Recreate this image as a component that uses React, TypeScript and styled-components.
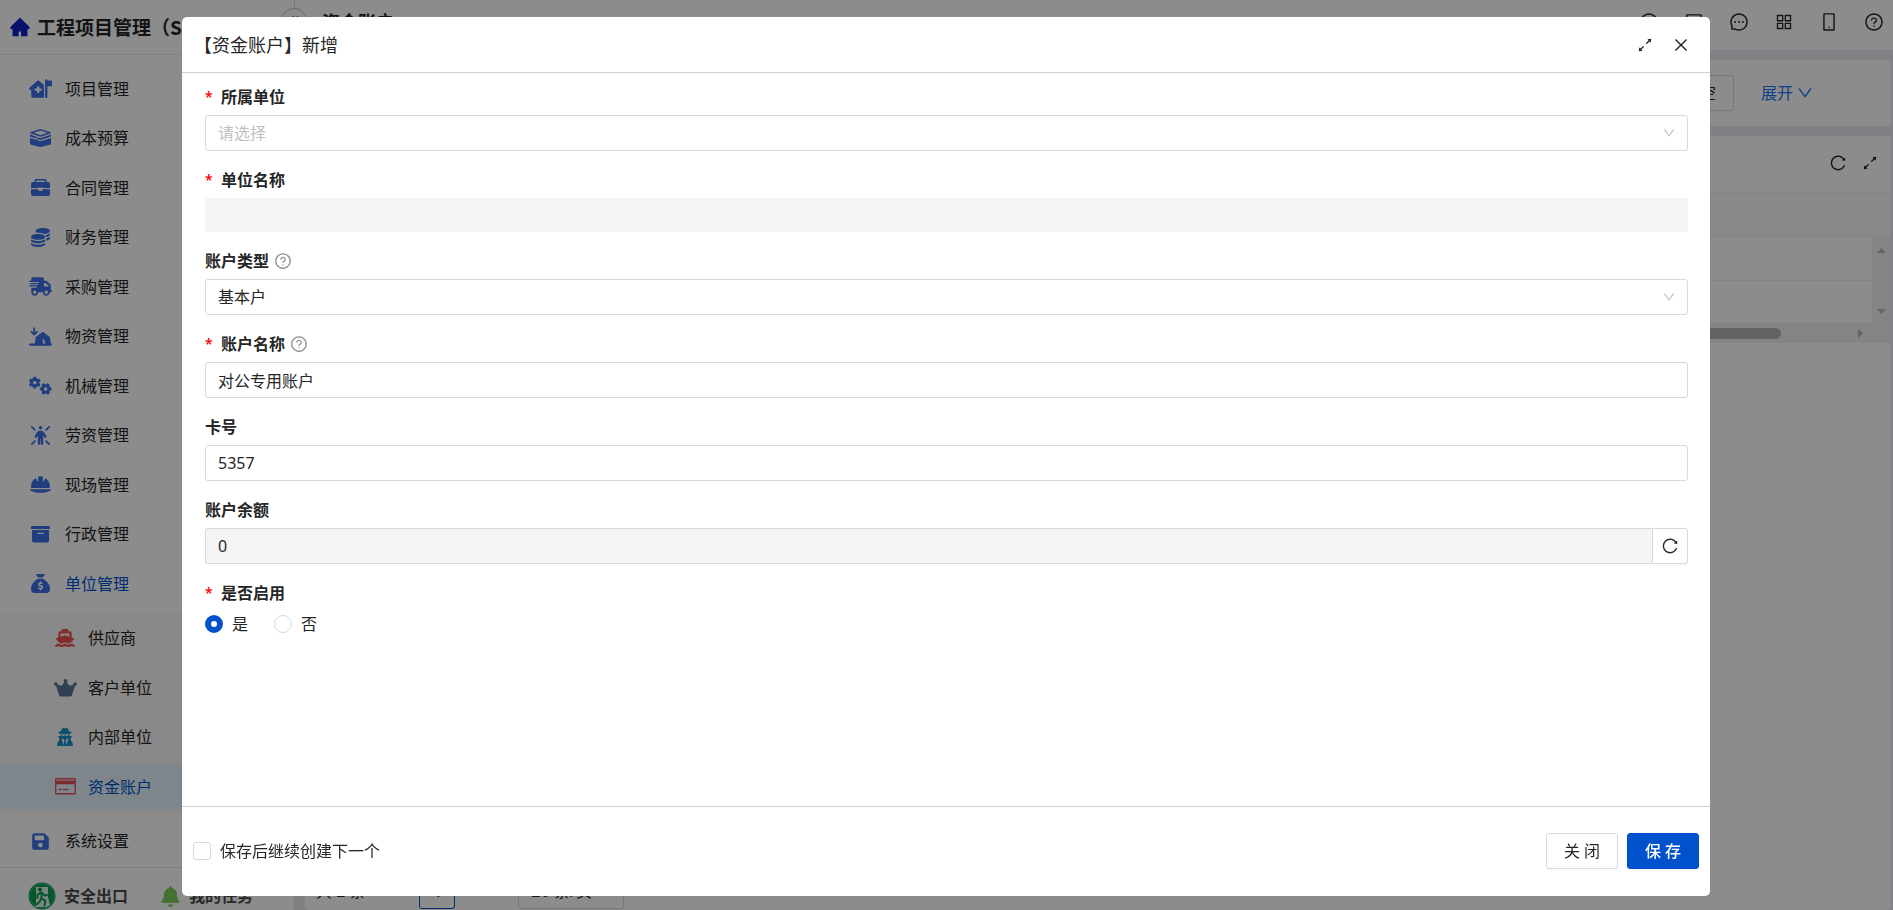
import React, { useState } from "react";
import styled, { createGlobalStyle, css } from "styled-components";
import {
  AiFillHome,
  AiOutlineAppstore,
  AiOutlineArrowsAlt,
  AiOutlineClockCircle,
  AiOutlineClose,
  AiOutlineDoubleLeft,
  AiOutlineDown,
  AiOutlineLeft,
  AiOutlineMessage,
  AiOutlineMobile,
  AiOutlineProfile,
  AiOutlineQuestionCircle,
  AiOutlineReload,
  AiOutlineRight,
} from "react-icons/ai";
import {
  FaBell,
  FaCoins,
  FaFloppyDisk,
  FaGears,
  FaHelmetSafety,
  FaHouseMedicalFlag,
  FaPersonRays,
  FaSackDollar,
  FaShip,
  FaTentArrowDownToLine,
  FaTruckFast,
  FaUserSecret,
} from "react-icons/fa6";

const primary = "#0052cc";
const ink = "#262626";
const line = "#d9d9d9";

const GlobalStyle = createGlobalStyle`
  *, *::before, *::after { box-sizing: border-box; }
  body {
    margin: 0;
    overflow: hidden;
    color: ${ink};
    background: #fff;
    font: 16px/24px "Noto Sans", "Noto Sans CJK SC", sans-serif;
  }
  button, input, select { font: inherit; color: inherit; }
  svg { display: block; flex: none; }
`;

/* ---------- page shell ---------- */

const Shell = styled.div`
  display: flex;
  height: 100vh;
  overflow: hidden;
`;

const Sidebar = styled.aside`
  display: flex;
  flex-direction: column;
  flex: none;
  width: 295px;
  border-right: 1px solid #e0e0e0;
`;

const Brand = styled.div`
  display: flex;
  align-items: center;
  gap: 6px;
  flex: none;
  height: 55px;
  padding-left: 9px;
  overflow: hidden;
  white-space: nowrap;
  font-family: "Noto Sans CJK SC", sans-serif;
  font-size: 19px;
  font-weight: 700;
  border-bottom: 1px solid #ececec;
  svg { color: #0d24c4; }
`;

const Nav = styled.nav`
  display: flex;
  flex-direction: column;
  flex: 1;
  padding: 9px 0 1px;
`;

const NavGroup = styled.ul<{ $count: number; $nested?: boolean }>`
  box-sizing: content-box;
  display: flex;
  flex-direction: column;
  flex: ${(p) => p.$count} 1 0;
  margin: 0;
  padding: 0;
  list-style: none;
  ${(p) =>
    p.$nested &&
    css`
      margin: 2px 0 3px;
      padding: 3px 0 2px;
      background: #fafafa;
    `}
`;

const NavCell = styled.li`
  display: flex;
  flex: 1 1 0;
  padding: 2px 0;
`;

const NavLink = styled.a<{ $nested?: boolean; $tone?: string; $selected?: boolean; $active?: boolean }>`
  display: flex;
  align-items: center;
  flex: 1;
  gap: ${(p) => (p.$nested ? 11 : 13)}px;
  padding-left: ${(p) => (p.$nested ? 53 : 28)}px;
  border-radius: 6px;
  color: ${(p) => (p.$active || p.$selected ? primary : ink)};
  background: ${(p) => (p.$selected ? "#e6f4ff" : "transparent")};
  text-decoration: none;
  span {
    display: flex;
    justify-content: center;
    width: 24px;
    color: ${(p) => p.$tone ?? "#3b6fe8"};
  }
`;

const Shortcuts = styled.div`
  display: flex;
  align-items: center;
  flex: none;
  height: 43px;
  padding: 14px 0 0 28px;
  border-top: 1px solid #e4e4e4;
`;

const Shortcut = styled.a<{ $tone?: string }>`
  display: flex;
  align-items: center;
  gap: 8px;
  height: 28px;
  margin-right: 32px;
  color: #4a4a4a;
  font-weight: 700;
  white-space: nowrap;
  text-decoration: none;
  svg { color: ${(p) => p.$tone}; }
`;

const Main = styled.main`
  display: flex;
  flex-direction: column;
  flex: 1;
  min-width: 0;
  background: #e8ebf0;
`;

const TopBar = styled.header`
  position: relative;
  display: flex;
  align-items: center;
  justify-content: space-between;
  flex: none;
  height: 50px;
  padding: 0 9px 6px 27px;
  background: #fff;
`;

const PageTitle = styled.h1`
  margin: 0;
  font-size: 18px;
  line-height: 24px;
`;

const CollapseButton = styled.button`
  position: absolute;
  top: 8px;
  left: -14px;
  display: grid;
  place-items: center;
  width: 26px;
  height: 26px;
  padding: 0;
  border: 1px solid #bfbfbf;
  border-radius: 50%;
  background: #fff;
`;

const TopTools = styled.div`
  display: flex;
  gap: 25px;
`;

const IconButton = styled.button`
  display: grid;
  place-items: center;
  padding: 0;
  border: 0;
  background: none;
  cursor: pointer;
`;

const Content = styled.div`
  display: flex;
  flex-direction: column;
  flex: 1;
  gap: 10px;
  min-height: 0;
  padding: 10px 2px 0 10px;
`;

const FilterCard = styled.section`
  display: flex;
  align-items: center;
  justify-content: flex-end;
  gap: 27px;
  flex: none;
  height: 66px;
  padding-right: 77px;
  border-radius: 4px;
  background: #fff;
`;

const ExpandLink = styled.button`
  display: flex;
  align-items: center;
  gap: 3px;
  padding: 0;
  border: 0;
  background: none;
  color: #2474f5;
`;

const ListCard = styled.section`
  display: flex;
  flex-direction: column;
  flex: 1;
  min-height: 0;
  border-radius: 4px;
  background: #fff;
`;

const ListTools = styled.div`
  display: flex;
  align-items: center;
  justify-content: flex-end;
  gap: 14px;
  flex: none;
  height: 56px;
  padding: 0 12px 2px 0;
`;

const TableArea = styled.div`
  display: grid;
  grid-template-columns: 1fr 19px;
  flex: none;
`;

const Table = styled.table`
  grid-column: 1 / -1;
  width: 100%;
  border-collapse: collapse;
  th {
    height: 44px;
    padding: 0;
    border: solid #efefef;
    border-width: 1px 0;
    background: #f9f9f9;
  }
`;

const BodyTable = styled.table`
  width: 100%;
  border-collapse: collapse;
  td {
    height: 43px;
    padding: 0;
  }
  tr + tr td { border-top: 1px solid #efefef; }
`;

const VerticalTrack = styled.div`
  display: flex;
  flex-direction: column;
  align-items: center;
  justify-content: space-between;
  padding: 11px 0 9px;
  background: #f1f1f1;
`;

const HorizontalTrack = styled.div`
  display: flex;
  align-items: center;
  grid-column: 1 / -1;
  height: 20px;
  padding-right: 28px;
  background: #f1f1f1;
`;

const Thumb = styled.div`
  flex: none;
  width: calc(100% - 82px);
  height: 11px;
  margin-right: auto;
  border-radius: 6px;
  background: #b4b4b4;
`;

const Pagination = styled.div`
  display: flex;
  align-items: center;
  gap: 20px;
  flex: none;
  margin-top: auto;
  height: 37px;
  padding: 0 0 1px 11px;
`;

const PageNumber = styled.button`
  width: 36px;
  height: 36px;
  padding: 0;
  border: 1px solid ${primary};
  border-radius: 3px;
  background: #fff;
  color: ${primary};
  font-weight: 600;
`;

const PageSize = styled.select`
  appearance: none;
  width: 106px;
  height: 36px;
  margin-left: 9px;
  padding: 0 12px;
  border: 1px solid ${line};
  border-radius: 3px;
  background: #fff;
`;

/* ---------- dialog ---------- */

const Mask = styled.div`
  position: fixed;
  inset: 0;
  display: flex;
  padding: 17px 183px 14px 182px;
  background: rgba(0, 0, 0, 0.45);
`;

const Dialog = styled.section`
  display: flex;
  flex-direction: column;
  flex: 1;
  min-width: 0;
  border-radius: 5px;
  background: #fff;
`;

const DialogHeader = styled.header`
  display: flex;
  align-items: center;
  justify-content: space-between;
  flex: none;
  height: 56px;
  padding: 0 20px 0 12px;
  border-bottom: 1px solid #d0d0d0;
`;

const DialogTitle = styled.h2`
  margin: 0;
  font-size: 18px;
  font-weight: 400;
`;

const DialogTools = styled.div`
  display: flex;
  gap: 18px;
`;

const Form = styled.form`
  flex: 1;
  min-height: 0;
  padding: 6px 22px 0 23px;
  overflow: hidden;
`;

const Field = styled.div`
  margin-bottom: 11px;
`;

const labelText = css`
  display: flex;
  align-items: center;
  gap: 5px;
  height: 36px;
  font-weight: 600;
  svg { color: #8c8c8c; }
`;

const Label = styled.label`
  ${labelText}
`;

const Group = styled.fieldset`
  margin: 0;
  padding: 0;
  border: 0;
`;

const Legend = styled.legend`
  ${labelText}
  padding: 0;
`;

const Star = styled.span`
  width: 11px;
  color: #f00;
  font-size: 14px;
`;

const control = css`
  width: 100%;
  height: 36px;
  padding: 0 12px;
  border: 1px solid ${line};
  border-radius: 3px;
  background: #fff;
  outline: none;
`;

const TextInput = styled.input`
  ${control}
  &:disabled { background: #f4f4f4; }
`;

const PlainInput = styled.input`
  ${control}
  display: block;
  height: 34px;
  border: 0;
  background: #f4f4f4;
`;

const SelectWrap = styled.div`
  position: relative;
  svg {
    position: absolute;
    top: 11px;
    right: 12px;
    color: #bfbfbf;
    pointer-events: none;
  }
`;

const Select = styled.select<{ $empty?: boolean }>`
  ${control}
  display: block;
  appearance: none;
  color: ${(p) => (p.$empty ? "#bfbfbf" : ink)};
`;

const InputGroup = styled.div`
  display: flex;
  ${TextInput} {
    flex: 1;
    border-right: 0;
    border-radius: 3px 0 0 3px;
  }
`;

const Addon = styled.button`
  display: grid;
  place-items: center;
  flex: none;
  width: 36px;
  height: 36px;
  padding: 0;
  border: 1px solid ${line};
  border-radius: 0 3px 3px 0;
  background: #fff;
  box-shadow: 0 2px 0 rgba(0, 0, 0, 0.02);
`;

const Choices = styled.div`
  display: flex;
  align-items: center;
  gap: 26px;
  height: 26px;
`;

const Choice = styled.label`
  display: flex;
  align-items: center;
  gap: 9px;
`;

const Radio = styled.input`
  appearance: none;
  width: 18px;
  height: 18px;
  margin: 0;
  border: 1px solid ${line};
  border-radius: 50%;
  background: #fff;
  &:checked { border: 6px solid ${primary}; }
`;

const CheckBox = styled.input`
  appearance: none;
  width: 18px;
  height: 18px;
  margin: 0;
  border: 1px solid ${line};
  border-radius: 3px;
  background: #fff;
  &:checked { border-color: ${primary}; background: ${primary}; }
`;

const DialogFooter = styled.footer`
  display: flex;
  align-items: center;
  justify-content: space-between;
  flex: none;
  height: 90px;
  padding: 0 11px 2px;
  border-top: 1px solid #d0d0d0;
`;

const Actions = styled.div`
  display: flex;
  gap: 9px;
`;

const Button = styled.button<{ $primary?: boolean }>`
  min-width: 72px;
  height: 36px;
  padding: 0 16px;
  border: 1px solid ${(p) => (p.$primary ? primary : line)};
  border-radius: 3px;
  background: ${(p) => (p.$primary ? primary : "#fff")};
  color: ${(p) => (p.$primary ? "#fff" : ink)};
  font-weight: ${(p) => (p.$primary ? 500 : 400)};
  box-shadow: 0 2px 0 rgba(0, 0, 0, 0.02);
`;

/* ---------- drawings ---------- */

const LayersIcon = () => (
  <svg width="21" height="18" viewBox="0 0 21 18" fill="currentColor" aria-hidden="true">
    <path
      fillRule="evenodd"
      d="M10.5 0 L20.4 3 Q21 3.6 20.4 4.4 L10.5 7.8 L0.6 4.4 Q0 3.6 0.6 3 Z M10.5 1.4 L3.6 3.7 L10.5 6.2 L17.4 3.7 Z"
    />
    <path d="M0 5.6 L10.5 9.2 L21 5.6 V7.6 L10.5 11 L0 7.6 Z M6 8.6 V10.4 L8 11 V9.2 Z" fillRule="evenodd" />
    <path d="M0 9 L10.5 12.2 L21 9 V14.4 Q21 15.4 20 15.8 L10.5 18 L1 15.8 Q0 15.4 0 14.4 Z" />
  </svg>
);

const BriefcaseIcon = () => (
  <svg width="19" height="17" viewBox="0 0 19 17" fill="currentColor" aria-hidden="true">
    <path
      fillRule="evenodd"
      d="M5 0 H14 Q15.4 0 15.4 1.4 V3 H17 Q19 3 19 5 V9 H12 V8.6 H7 V9 H0 V5 Q0 3 2 3 H3.6 V1.4 Q3.6 0 5 0 Z M5.2 1.5 V3 H13.8 V1.5 Z"
    />
    <path d="M0 10.2 H7 L8 12 H11 L12 10.2 H19 V15 Q19 17 17 17 H2 Q0 17 0 15 Z" />
  </svg>
);

const ArchiveIcon = () => (
  <svg width="19" height="17" viewBox="0 0 19 17" fill="currentColor" aria-hidden="true">
    <path d="M1 0 H18 Q19 0 19 1 V3 H0 V1 Q0 0 1 0 Z" />
    <path fillRule="evenodd" d="M1 4 H18 V14.5 Q18 16.5 16 16.5 H3 Q1 16.5 1 14.5 Z M6.2 6.8 V8 H12.8 V6.8 Z" />
  </svg>
);

const CrownIcon = () => (
  <svg width="23" height="18" viewBox="0 0 23 18" fill="currentColor" aria-hidden="true">
    <circle cx="11.5" cy="2" r="1.9" />
    <circle cx="1.8" cy="5" r="1.8" />
    <circle cx="21.2" cy="5" r="1.8" />
    <path d="M1.6 5.6 L2.8 5 L7.2 7 L10.6 3 H12.4 L15.8 7 L20.2 5 L21.4 5.6 L18 16 Q17.4 17.6 16 17.6 H7 Q5.6 17.6 5 16 Z" />
  </svg>
);

const CardIcon = () => (
  <svg width="21" height="17" viewBox="0 0 21 17" fill="currentColor" aria-hidden="true">
    <path
      fillRule="evenodd"
      d="M1.5 0 H19.5 A1.5 1.5 0 0 1 21 1.5 V15 A1.5 1.5 0 0 1 19.5 16.5 H1.5 A1.5 1.5 0 0 1 0 15 V1.5 A1.5 1.5 0 0 1 1.5 0 Z M1.4 1.4 V2.4 H19.6 V1.4 Z M1.4 6.2 V15.1 H19.6 V6.2 Z"
    />
    <path d="M3.6 10.8 H6.8 V12.2 H3.6 Z M8 10.8 H13.4 V12.2 H8 Z" />
  </svg>
);

const ExitIcon = () => (
  <svg width="28" height="28" viewBox="0 0 28 28" aria-hidden="true">
    <circle cx="14" cy="14" r="13.5" fill="#0a9d52" />
    <circle cx="14" cy="14" r="12.4" fill="none" stroke="#3fd08a" strokeWidth="0.8" />
    <path d="M8 5 H20 V15 L22 23 L19 25 H7 L8 20 Z" fill="#e6f5ec" />
    <circle cx="12" cy="7.6" r="2.1" fill="#0a9d52" />
    <path
      d="M13 10.5 L9.4 12.6 V16 M13.5 10.5 L17 13.5 L19 13 M13.5 11.5 L13.5 16.5 L17.4 18.6 L16.6 23.5 M13 16.5 L11.6 20 L8 22.6"
      fill="none"
      stroke="#0a9d52"
      strokeWidth="2"
      strokeLinecap="round"
      strokeLinejoin="round"
    />
  </svg>
);

const Triangle = ({ d, w, h }: { d: string; w: number; h: number }) => (
  <svg width={w} height={h} viewBox={`0 0 ${w} ${h}`} fill="#b4b4b4" aria-hidden="true">
    <path d={d} />
  </svg>
);

/* ---------- data ---------- */

type Entry = { text: string; icon: React.ReactNode; tone?: string; active?: boolean; selected?: boolean };

const modules: Entry[] = [
  { text: "项目管理", icon: <FaHouseMedicalFlag size={23} /> },
  { text: "成本预算", icon: <LayersIcon /> },
  { text: "合同管理", icon: <BriefcaseIcon /> },
  { text: "财务管理", icon: <FaCoins size={19} /> },
  { text: "采购管理", icon: <FaTruckFast size={23} /> },
  { text: "物资管理", icon: <FaTentArrowDownToLine size={23} /> },
  { text: "机械管理", icon: <FaGears size={23} /> },
  { text: "劳资管理", icon: <FaPersonRays size={19} /> },
  { text: "现场管理", icon: <FaHelmetSafety size={21} /> },
  { text: "行政管理", icon: <ArchiveIcon /> },
  { text: "单位管理", icon: <FaSackDollar size={19} />, active: true },
];

const units: Entry[] = [
  { text: "供应商", icon: <FaShip size={20} />, tone: "#ee5050" },
  { text: "客户单位", icon: <CrownIcon />, tone: "#5a7592" },
  { text: "内部单位", icon: <FaUserSecret size={18} />, tone: "#1890c8" },
  { text: "资金账户", icon: <CardIcon />, tone: "#e84f5c", selected: true },
];

const settings: Entry[] = [{ text: "系统设置", icon: <FaFloppyDisk size={19} /> }];

const NavList = ({ items, nested }: { items: Entry[]; nested?: boolean }) => (
  <NavGroup $count={items.length} $nested={nested}>
    {items.map((item) => (
      <NavCell key={item.text}>
        <NavLink href="#" $nested={nested} $tone={item.tone} $active={item.active} $selected={item.selected}>
          <span>{item.icon}</span>
          {item.text}
        </NavLink>
      </NavCell>
    ))}
  </NavGroup>
);

export default function App() {
  const [unit, setUnit] = useState("");
  const [enabled, setEnabled] = useState("yes");

  return (
    <>
      <GlobalStyle />
      <Shell>
        <Sidebar>
          <Brand>
            <AiFillHome size={22} />
            工程项目管理（SAAS）
          </Brand>
          <Nav>
            <NavList items={modules} />
            <NavList items={units} nested />
            <NavList items={settings} />
          </Nav>
          <Shortcuts>
            <Shortcut href="#">
              <ExitIcon />
              安全出口
            </Shortcut>
            <Shortcut href="#" $tone="#7ed05c">
              <FaBell size={21} />
              我的任务
            </Shortcut>
          </Shortcuts>
        </Sidebar>
        <Main>
          <TopBar>
            <CollapseButton aria-label="折叠菜单">
              <AiOutlineDoubleLeft size={14} />
            </CollapseButton>
            <PageTitle>资金账户</PageTitle>
            <TopTools>
              <IconButton aria-label="历史"><AiOutlineClockCircle size={20} /></IconButton>
              <IconButton aria-label="待办"><AiOutlineProfile size={20} /></IconButton>
              <IconButton aria-label="消息"><AiOutlineMessage size={20} /></IconButton>
              <IconButton aria-label="应用"><AiOutlineAppstore size={20} /></IconButton>
              <IconButton aria-label="手机"><AiOutlineMobile size={20} /></IconButton>
              <IconButton aria-label="帮助"><AiOutlineQuestionCircle size={20} /></IconButton>
            </TopTools>
          </TopBar>
          <Content>
            <FilterCard>
              <Button>清 空</Button>
              <ExpandLink>
                展开
                <AiOutlineDown size={18} />
              </ExpandLink>
            </FilterCard>
            <ListCard>
              <ListTools>
                <IconButton aria-label="刷新"><AiOutlineReload size={18} /></IconButton>
                <IconButton aria-label="全屏"><AiOutlineArrowsAlt size={18} /></IconButton>
              </ListTools>
              <TableArea>
                <Table>
                  <thead>
                    <tr><th /></tr>
                  </thead>
                </Table>
                <BodyTable>
                  <tbody>
                    <tr><td /></tr>
                    <tr><td /></tr>
                  </tbody>
                </BodyTable>
                <VerticalTrack>
                  <Triangle w={9} h={5} d="M0 5 L4.5 0 L9 5 Z" />
                  <Triangle w={9} h={5} d="M0 0 L4.5 5 L9 0 Z" />
                </VerticalTrack>
                <HorizontalTrack>
                  <Thumb />
                  <Triangle w={5} h={9} d="M0 0 L5 4.5 L0 9 Z" />
                </HorizontalTrack>
              </TableArea>
              <Pagination>
                <span>共 2 条</span>
                <IconButton aria-label="上一页"><AiOutlineLeft size={14} /></IconButton>
                <PageNumber>1</PageNumber>
                <IconButton aria-label="下一页"><AiOutlineRight size={14} /></IconButton>
                <PageSize aria-label="每页条数">
                  <option>20 条/页</option>
                </PageSize>
              </Pagination>
            </ListCard>
          </Content>
        </Main>
      </Shell>

      <Mask>
        <Dialog role="dialog" aria-modal="true" aria-labelledby="dialog-title">
          <DialogHeader>
            <DialogTitle id="dialog-title">【资金账户】新增</DialogTitle>
            <DialogTools>
              <IconButton aria-label="最大化"><AiOutlineArrowsAlt size={18} /></IconButton>
              <IconButton aria-label="关闭窗口"><AiOutlineClose size={18} /></IconButton>
            </DialogTools>
          </DialogHeader>

          <Form id="account-form" onSubmit={(e) => e.preventDefault()}>
            <Field>
              <Label htmlFor="unit"><Star>*</Star>所属单位</Label>
              <SelectWrap>
                <Select id="unit" $empty={!unit} value={unit} onChange={(e) => setUnit(e.target.value)}>
                  <option value="">请选择</option>
                </Select>
                <AiOutlineDown size={14} />
              </SelectWrap>
            </Field>
            <Field>
              <Label htmlFor="unit-name"><Star>*</Star>单位名称</Label>
              <PlainInput id="unit-name" disabled />
            </Field>
            <Field>
              <Label htmlFor="kind">账户类型<AiOutlineQuestionCircle size={18} /></Label>
              <SelectWrap>
                <Select id="kind" defaultValue="basic">
                  <option value="basic">基本户</option>
                </Select>
                <AiOutlineDown size={14} />
              </SelectWrap>
            </Field>
            <Field>
              <Label htmlFor="name"><Star>*</Star>账户名称<AiOutlineQuestionCircle size={18} /></Label>
              <TextInput id="name" defaultValue="对公专用账户" />
            </Field>
            <Field>
              <Label htmlFor="card">卡号</Label>
              <TextInput id="card" defaultValue="5357" />
            </Field>
            <Field>
              <Label htmlFor="balance">账户余额</Label>
              <InputGroup>
                <TextInput id="balance" defaultValue="0" disabled />
                <Addon type="button" aria-label="刷新余额"><AiOutlineReload size={18} /></Addon>
              </InputGroup>
            </Field>
            <Group>
              <Legend><Star>*</Star>是否启用</Legend>
              <Choices>
                <Choice>
                  <Radio type="radio" name="enabled" checked={enabled === "yes"} onChange={() => setEnabled("yes")} />
                  是
                </Choice>
                <Choice>
                  <Radio type="radio" name="enabled" checked={enabled === "no"} onChange={() => setEnabled("no")} />
                  否
                </Choice>
              </Choices>
            </Group>
          </Form>

          <DialogFooter>
            <Choice>
              <CheckBox type="checkbox" />
              保存后继续创建下一个
            </Choice>
            <Actions>
              <Button type="button">关 闭</Button>
              <Button type="submit" form="account-form" $primary>保 存</Button>
            </Actions>
          </DialogFooter>
        </Dialog>
      </Mask>
    </>
  );
}
